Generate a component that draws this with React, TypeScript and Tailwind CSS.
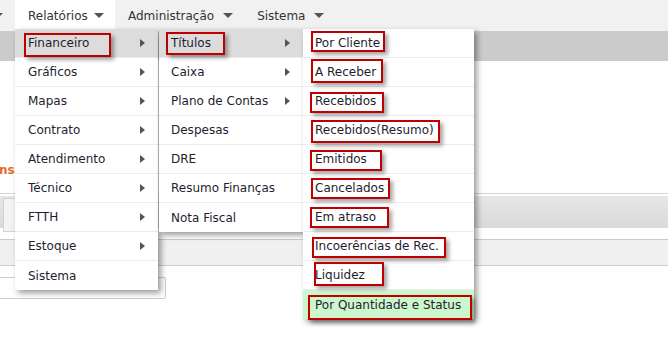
import React from "react";

interface MenuItem {
  label: string;
  sub?: boolean;
  active?: boolean;
  green?: boolean;
}

// annotation boxes drawn over the screenshot: [left, top, width, height]
const marks: [number, number, number, number][] = [
  [24, 33, 87, 24],
  [166, 32, 59, 23],
  [311, 31, 74, 21],
  [311, 59, 72, 24],
  [310, 92, 74, 21],
  [311, 120, 129, 23],
  [310, 150, 72, 21],
  [311, 178, 79, 21],
  [310, 207, 79, 21],
  [312, 237, 134, 21],
  [314, 262, 70, 24],
  [308, 295, 164, 25],
];

const relatorios: MenuItem[] = [
  { label: "Financeiro", sub: true, active: true },
  { label: "Gráficos", sub: true },
  { label: "Mapas", sub: true },
  { label: "Contrato", sub: true },
  { label: "Atendimento", sub: true },
  { label: "Técnico", sub: true },
  { label: "FTTH", sub: true },
  { label: "Estoque", sub: true },
  { label: "Sistema" },
];

const financeiro: MenuItem[] = [
  { label: "Títulos", sub: true, active: true },
  { label: "Caixa", sub: true },
  { label: "Plano de Contas", sub: true },
  { label: "Despesas" },
  { label: "DRE" },
  { label: "Resumo Finanças" },
  { label: "Nota Fiscal" },
];

const titulos: MenuItem[] = [
  { label: "Por Cliente" },
  { label: "A Receber" },
  { label: "Recebidos" },
  { label: "Recebidos(Resumo)" },
  { label: "Emitidos" },
  { label: "Cancelados" },
  { label: "Em atraso" },
  { label: "Incoerências de Rec." },
  { label: "Liquidez" },
  { label: "Por Quantidade e Status", green: true },
];

function Caret({ className = "" }: { className?: string }) {
  return (
    <svg width="10" height="5" viewBox="0 0 10 5" className={className}>
      <path d="M0 0h10L5 5z" fill="#555" />
    </svg>
  );
}

function Arrow() {
  return (
    <svg width="5" height="8" viewBox="0 0 5 8" className="shrink-0">
      <path d="M0 0l5 4-5 4z" fill="#555" />
    </svg>
  );
}

function Menu({ items, className, pad }: { items: MenuItem[]; className: string; pad: string }) {
  return (
    <div className={`absolute top-[29px] bg-white shadow-[3px_3px_6px_rgba(0,0,0,0.4)] ${className}`}>
      {items.map((it, i) => (
        <div
          key={it.label}
          className={`flex h-[29px] items-center justify-between pr-[13px] ${pad} ${
            i < items.length - 1 ? "border-b border-[#ececec]" : ""
          } ${it.active ? "bg-[#dcdcdc]" : it.green ? "bg-[#ccf7cc]" : ""}`}
        >
          <span className="whitespace-nowrap text-[#1e1e2e]">{it.label}</span>
          {it.sub && <Arrow />}
        </div>
      ))}
    </div>
  );
}

export default function App() {
  return (
    <div className="relative h-[344px] w-[668px] overflow-hidden bg-white font-['DejaVu_Sans',sans-serif] text-[12px]">
      {/* top navigation */}
      <div className="flex h-[31px] items-center bg-[#f1f1f1] text-[#333]">
        <Caret className="-ml-[7px] shrink-0" />
        <div className="ml-[12px] flex h-full w-[100px] items-center bg-white pl-[13px]">
          <span>Relatórios</span>
          <Caret className="ml-[6px]" />
        </div>
        <div className="flex items-center pl-[13px]">
          <span>Administração</span>
          <Caret className="ml-[9px]" />
        </div>
        <div className="flex items-center pl-[24px]">
          <span>Sistema</span>
          <Caret className="ml-[9px]" />
        </div>
      </div>
      <div className="h-[30px] bg-[#cbcbcb]" />

      {/* page content behind the menus */}
      <div className="pt-[101px]">
        <div className="-ml-[22px] h-[16px] font-bold leading-[16px] text-[#e8692c]">Transações Financeiras</div>
      </div>
      <div className="mt-[15px] border-t border-[#d4d4d4] pt-[2px]">
        <div className="h-[32px] bg-gradient-to-b from-[#e6e6e6] to-[#dadada] pt-[2px]">
          <div className="ml-[3px] h-[34px] w-[60px] border border-[#d2d2d2] bg-[#f3f3f3]" />
        </div>
      </div>
      <div className="mt-[11px] h-[27px] border-y border-[#cccccc] bg-[#f0f0f0]" />
      <div className="mt-[11px] -ml-[2px] h-[22px] w-[168px] rounded-[2px] border border-[#cccccc]" />

      {/* dropdown menus */}
      <Menu items={relatorios} className="left-[15px] w-[143px]" pad="pl-[13px]" />
      <Menu items={financeiro} className="left-[159px] w-[144px]" pad="pl-[12px]" />
      <Menu items={titulos} className="left-[303px] w-[171px]" pad="pl-[12px]" />

      {/* red annotation boxes */}
      {marks.map(([l, t, w, h], i) => (
        <div
          key={i}
          className="absolute border-2 border-[#c00000] shadow-[3px_3px_4px_rgba(0,0,0,0.35)]"
          style={{ left: l, top: t, width: w, height: h }}
        />
      ))}
    </div>
  );
}
